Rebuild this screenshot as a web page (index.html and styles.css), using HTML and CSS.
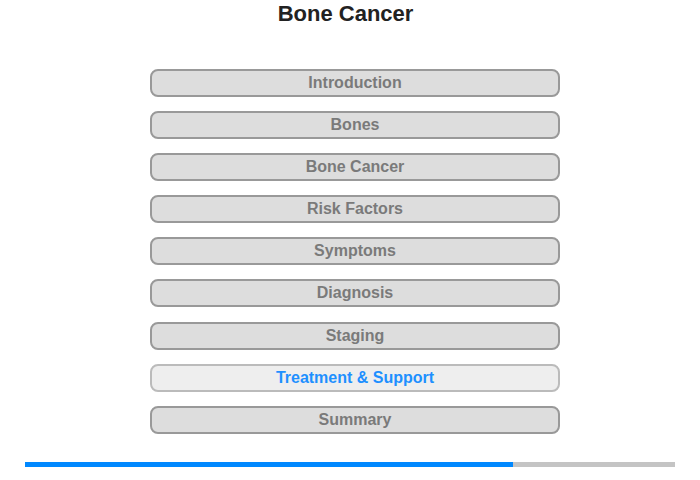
FILE: index.html
```html
<!DOCTYPE html>
<html lang="en">
<head>
    <meta charset="UTF-8">
    <meta name="viewport" content="width=device-width, initial-scale=1.0">
    <title>Bone Cancer</title>
    <link rel="stylesheet" href="styles.css">
</head>
<body>
    <h1 class="title">Bone Cancer</h1>
    <div class="menu">
        <div class="menu-item">Introduction</div>
        <div class="menu-item">Bones</div>
        <div class="menu-item">Bone Cancer</div>
        <div class="menu-item">Risk Factors</div>
        <div class="menu-item">Symptoms</div>
        <div class="menu-item">Diagnosis</div>
        <div class="menu-item">Staging</div>
        <div class="menu-item active">Treatment &amp; Support</div>
        <div class="menu-item">Summary</div>
    </div>
    <div class="progress">
        <div class="progress-fill" style="width: 75%"></div>
    </div>
</body>
</html>
```

FILE: styles.css
```css
body, html {
    margin: 0;
    font-family: "Liberation Sans", Arial, sans-serif;
    background-color: white;
}
.title {
    margin: 0;
    padding: 1px 9px 0 0;
    font-size: 22px;
    line-height: 25px;
    text-align: center;
    color: #222;
}
.menu {
    display: flex;
    flex-direction: column;
    gap: 14.1px;
    width: 410px;
    margin: 43px 0 0 150px;
}
.menu-item {
    height: 24px;
    line-height: 24px;
    border: 2px solid #999;
    border-radius: 8px;
    background-color: #ddd;
    color: #7a7a7a;
    font-size: 16px;
    font-weight: bold;
    text-align: center;
    cursor: pointer;
}
.menu-item.active {
    background-color: #eee;
    border-color: #bbb;
    color: #1e90ff;
}
.progress {
    width: 650px;
    height: 5px;
    margin: 28px 0 0 25px;
    background-color: #c4c4c4;
}
.progress-fill {
    height: 100%;
    background-color: #0088ff;
}
```
